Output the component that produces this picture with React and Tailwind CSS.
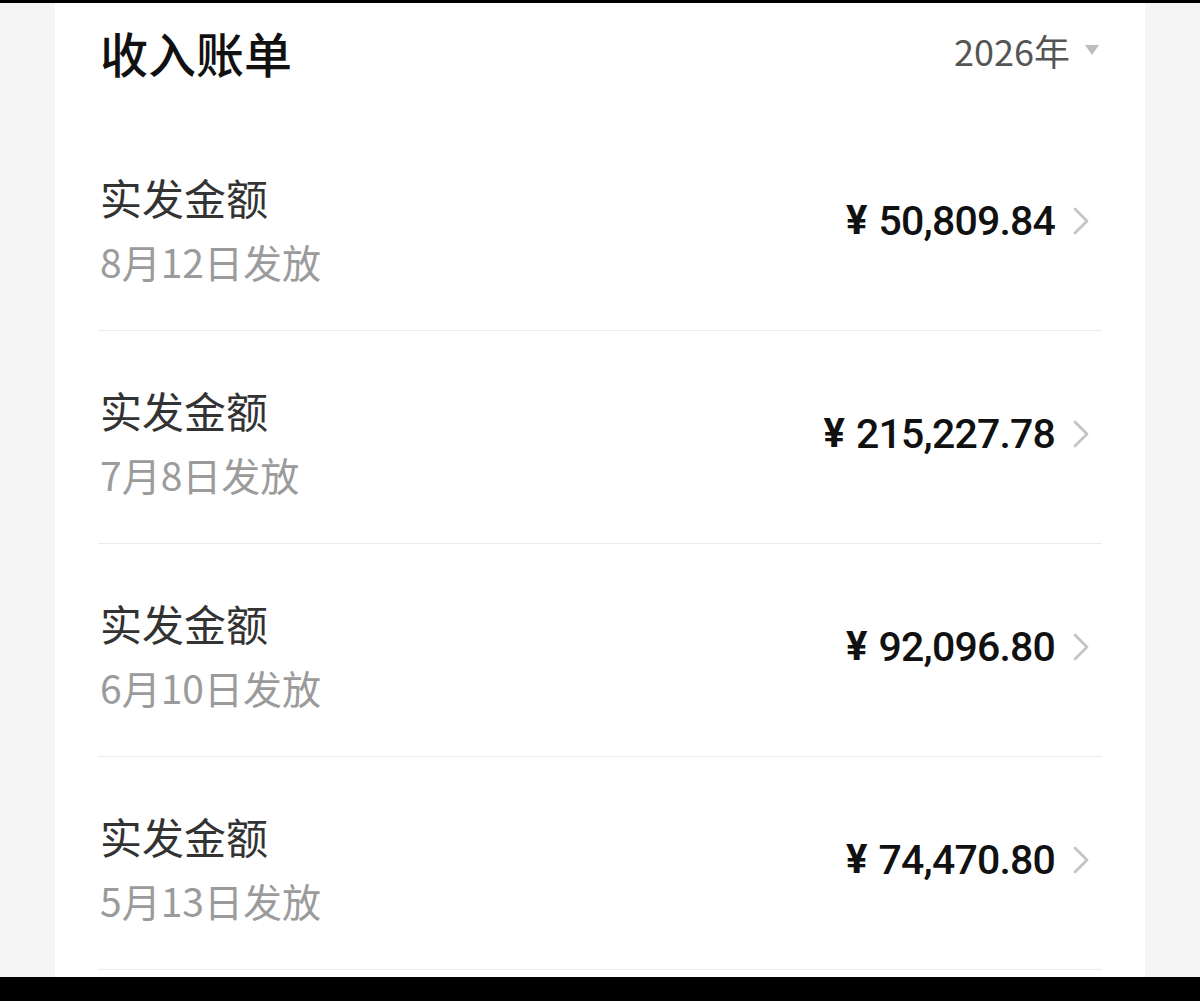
const bills = [
  { date: '8月12日发放', amount: '50,809.84' },
  { date: '7月8日发放', amount: '215,227.78' },
  { date: '6月10日发放', amount: '92,096.80' },
  { date: '5月13日发放', amount: '74,470.80' },
]

const cjk = { fontFamily: '"Noto Sans CJK SC", "Noto Sans", sans-serif' }
const num = { fontFamily: 'Roboto, "Noto Sans CJK SC", sans-serif' }

function Chevron() {
  return (
    <svg width="18" height="28" viewBox="0 0 18 28" fill="none" className="shrink-0">
      <polyline points="3,2 15,14 3,26" stroke="#c4c4c4" strokeWidth="2.8" strokeLinecap="round" strokeLinejoin="round" />
    </svg>
  )
}

function BillRow({ date, amount }) {
  return (
    <div className="flex h-[213px] items-center justify-between border-b border-[#ebebeb] pl-[2px] pr-[12px]">
      <div className="mt-[10px] flex flex-col">
        <span className="text-[42px] leading-[64px] text-[#333]">实发金额</span>
        <span className="text-[39px] leading-[64px] text-[#9b9b9b]">{date}</span>
      </div>
      <div className="mb-[6px] flex items-center gap-[17px]">
        <div className="flex items-center text-[#111]" style={num}>
          <span className="mr-[11px] text-[40px] font-bold leading-none">¥</span>
          <span className="text-[41px] font-medium leading-none tracking-[-0.8px]">{amount}</span>
        </div>
        <Chevron />
      </div>
    </div>
  )
}

export default function App() {
  return (
    <div className="flex h-[1001px] w-[1200px] flex-col bg-black" style={cjk}>
      <div className="h-[3px] bg-black" />
      <div className="flex flex-1 overflow-hidden bg-[#f5f5f5] px-[55px]">
        <div className="flex flex-1 flex-col bg-white px-[43px]">
          <div className="mb-[17px] flex h-[98px] items-center justify-between">
            <h1 className="pl-[2px] text-[48px] font-medium leading-none text-[#111]">收入账单</h1>
            <div className="mb-[4px] flex items-center gap-[15px] pr-[3px]">
              <span className="text-[36px] leading-none text-[#555]">2026年</span>
              <svg width="14" height="10" viewBox="0 0 14 10">
                <polygon points="0,0 14,0 7,10" fill="#bdbdbd" />
              </svg>
            </div>
          </div>
          {bills.map((b) => (
            <BillRow key={b.date} {...b} />
          ))}
        </div>
      </div>
      <div className="h-[24px] bg-black" />
    </div>
  )
}
